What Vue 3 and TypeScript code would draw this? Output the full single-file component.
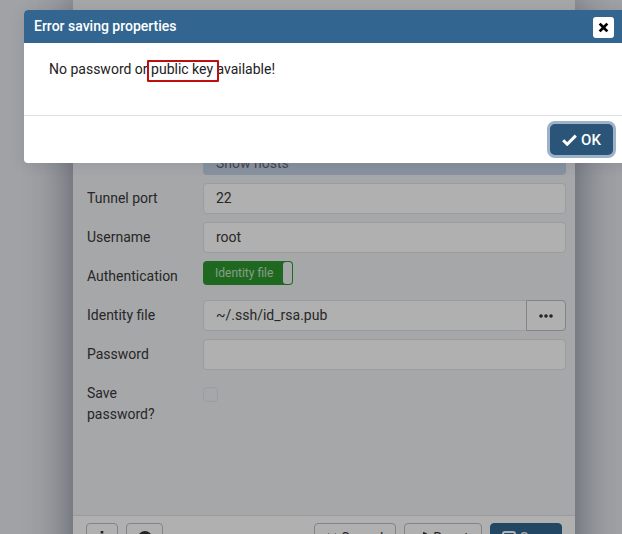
<template>
  <div class="page">
    <div class="panel">
      <div class="form">
        <div class="row clipped">
          <span class="label"></span>
          <div class="hidden-value">Show hosts</div>
        </div>
        <div v-for="f in fields" :key="f.label" class="row">
          <label class="label">{{ f.label }}</label>
          <div class="input">{{ f.value }}</div>
        </div>
        <div class="row">
          <label class="label">Authentication</label>
          <div class="toggle">
            <span class="toggle-text">Identity file</span>
            <span class="toggle-handle"></span>
          </div>
        </div>
        <div class="row">
          <label class="label">Identity file</label>
          <div class="input-group">
            <div class="input joined">~/.ssh/id_rsa.pub</div>
            <button class="dots" type="button">
              <svg width="14" height="4" viewBox="0 0 14 4"><circle cx="2" cy="2" r="1.8" /><circle cx="7" cy="2" r="1.8" /><circle cx="12" cy="2" r="1.8" /></svg>
            </button>
          </div>
        </div>
        <div class="row">
          <label class="label">Password</label>
          <div class="input"></div>
        </div>
        <div class="row save">
          <label class="label">Save password?</label>
          <span class="checkbox"></span>
        </div>
      </div>
      <div class="panel-footer">
        <button class="btn info" type="button" aria-label="Info">
          <svg width="6" height="14" viewBox="0 0 6 14"><path d="M1.700 0h2.600v2.600H1.700zM.5 5h3.800v7H6v2H0v-2h1.500V7H.5z" /></svg>
        </button>
        <button class="btn help" type="button" aria-label="Help">
          <svg width="14" height="14" viewBox="0 0 14 14"><circle cx="7" cy="7" r="7" /></svg>
        </button>
        <span class="spacer"></span>
        <button class="btn cancel" type="button">
          <svg width="10" height="10" viewBox="0 0 10 10"><path d="M1 1 9 9M9 1 1 9" fill="none" stroke="#333" stroke-width="2" /></svg>
          Cancel
        </button>
        <button class="btn reset" type="button">
          <svg width="12" height="14" viewBox="0 0 12 14"><path d="M6 2a4.500 4.500 0 1 1-4.500 4.500" fill="none" stroke="#333" stroke-width="2" /></svg>
          Reset
        </button>
        <button class="btn save-btn" type="button">
          <svg width="14" height="14" viewBox="0 0 14 14"><rect x="1" y="1" width="12" height="12" rx="2" fill="none" stroke="#fff" stroke-width="2" /></svg>
          Save
        </button>
      </div>
    </div>

    <div class="scrim"></div>

    <div class="dialog">
      <div class="dialog-head">
        <span>Error saving properties</span>
        <button class="close" type="button" aria-label="Close">
          <svg width="11" height="11" viewBox="0 0 11 11"><path d="M2.600 .7 5.500 3.600 8.400 .7 10.300 2.600 7.400 5.500 10.300 8.400 8.400 10.300 5.500 7.400 2.600 10.300 .7 8.400 3.600 5.500 .7 2.600Z" /></svg>
        </button>
      </div>
      <div class="dialog-body">
        <p class="message">No password or <span class="mark">public key</span> available!</p>
      </div>
      <div class="dialog-foot">
        <button class="ok" type="button">
          <svg width="15" height="12" viewBox="0 0 15 12"><path d="M1.200 6.200 5.200 10.200 13.800 1.600" fill="none" stroke="#fff" stroke-width="3" /></svg>
          OK
        </button>
      </div>
    </div>
  </div>
</template>

<script setup lang="ts">
const fields = [
  { label: 'Tunnel port', value: '22' },
  { label: 'Username', value: 'root' },
]
</script>

<style>
html,
body {
  margin: 0;
  overflow: hidden;
}
</style>

<style scoped>
.page {
  position: relative;
  width: 622px;
  height: 534px;
  overflow: hidden;
  background: #e6e9ee;
  font-family: Roboto, "Liberation Sans", sans-serif;
  font-size: 14px;
  color: #222;
}
.panel {
  width: 502px;
  height: 640px;
  margin-left: 73px;
  background: #eeeff3;
  color: #383838;
  box-shadow: 0 0 45px rgba(20, 30, 55, 0.55);
  display: flex;
  flex-direction: column;
}
.form {
  flex: 0 0 515px;
  box-sizing: border-box;
  padding: 144px 9px 0 14px;
}
.row {
  display: grid;
  grid-template-columns: 116px 1fr;
  align-items: start;
  min-height: 31px;
  margin-bottom: 8px;
}
.hidden-value {
  box-sizing: border-box;
  height: 31px;
  line-height: 38px;
  padding-left: 13px;
  background: #c3d2e6;
  border-radius: 4px;
  color: #666;
}
.label {
  display: block;
  max-width: 96px;
  margin-top: 5px;
  line-height: 21px;
}
.input {
  box-sizing: border-box;
  height: 31px;
  line-height: 29px;
  padding-left: 12px;
  background: #fcfcfc;
  border: 1px solid #dde0e6;
  border-radius: 4px;
  font-size: 14px;
}
.toggle {
  display: flex;
  align-items: center;
  box-sizing: border-box;
  width: 90px;
  height: 24px;
  background: #2d962d;
  border-radius: 4px;
  color: rgba(255, 255, 255, 0.72);
  font-size: 12px;
}
.toggle-text {
  flex: 1;
  padding-left: 12px;
}
.toggle-handle {
  box-sizing: border-box;
  width: 9px;
  height: 22px;
  margin-right: 1px;
  background: #eeeff3;
  border-radius: 3px;
}
.input-group {
  display: flex;
}
.joined {
  flex: 1;
  border-radius: 4px 0 0 4px;
}
.dots {
  box-sizing: border-box;
  width: 40px;
  height: 31px;
  margin-left: -1px;
  padding: 0;
  background: #fcfcfc;
  border: 1px solid #bcbcc4;
  border-radius: 0 4px 4px 0;
}
.dots svg {
  display: block;
  margin: auto;
  fill: #333;
}
.checkbox {
  box-sizing: border-box;
  width: 15px;
  height: 15px;
  margin-top: 9px;
  background: #eef0f4;
  border: 1px solid #dde0e6;
  border-radius: 4px;
}
.panel-footer {
  flex: 1;
  display: flex;
  gap: 8px;
  padding: 7px 13px 0;
  background: #fcfcfc;
  border-top: 1px solid #dde0e6;
}
.spacer {
  flex: 1;
}
.btn {
  box-sizing: border-box;
  display: flex;
  align-items: center;
  justify-content: center;
  gap: 4px;
  height: 31px;
  padding: 0 0 1px;
  background: #fcfcfc;
  border: 1px solid #bcbcc4;
  border-radius: 4px;
  font: inherit;
  color: #383838;
}
.btn svg {
  fill: #333;
}
.info {
  width: 32px;
}
.help {
  width: 37px;
}
.cancel {
  width: 82px;
}
.reset {
  width: 78px;
}
.save-btn {
  width: 72px;
  background: #326690;
  border-color: #326690;
  color: #fff;
}
.scrim {
  position: absolute;
  inset: 0;
  background: rgba(0, 0, 0, 0.3);
}
.dialog {
  position: absolute;
  left: 24px;
  top: 10px;
  width: 610px;
  height: 153px;
  display: flex;
  flex-direction: column;
  background: #fff;
  border-radius: 4px;
  box-shadow: 0 2px 14px rgba(30, 50, 80, 0.12);
  overflow: hidden;
}
.dialog-head {
  display: flex;
  align-items: center;
  justify-content: space-between;
  flex: 0 0 33px;
  box-sizing: border-box;
  padding: 0 20px 0 10px;
  background: #326690;
  color: #fff;
  font-size: 14px;
  font-weight: 500;
}
.dialog-head > span {
  margin-bottom: 1px;
}
.close {
  width: 21px;
  height: 21px;
  margin-top: 2px;
  padding: 0;
  display: flex;
  align-items: center;
  justify-content: center;
  background: #fff;
  border: 0;
  border-radius: 3px;
}
.dialog-body {
  flex: 0 0 73px;
  box-sizing: border-box;
  border-bottom: 1px solid #dde0e6;
  padding: 18px 25px 0;
}
.message {
  margin: 0;
  line-height: 16px;
}
.mark {
  position: relative;
}
.mark::after {
  content: "";
  position: absolute;
  left: -4px;
  right: -6px;
  top: -1px;
  height: 18px;
  border: 2px solid #c00d0d;
  border-radius: 1px;
}
.dialog-foot {
  flex: 1;
  display: flex;
  justify-content: flex-end;
  align-items: center;
  padding-right: 21px;
}
.ok {
  display: flex;
  align-items: center;
  justify-content: center;
  gap: 4px;
  width: 63px;
  height: 31px;
  padding: 0;
  background: #2a5578;
  border: 0;
  border-radius: 5px;
  box-shadow: 0 0 0 3px #9bb2c9;
  color: #fff;
  font: 500 15px Roboto, "Liberation Sans", sans-serif;
}
</style>
